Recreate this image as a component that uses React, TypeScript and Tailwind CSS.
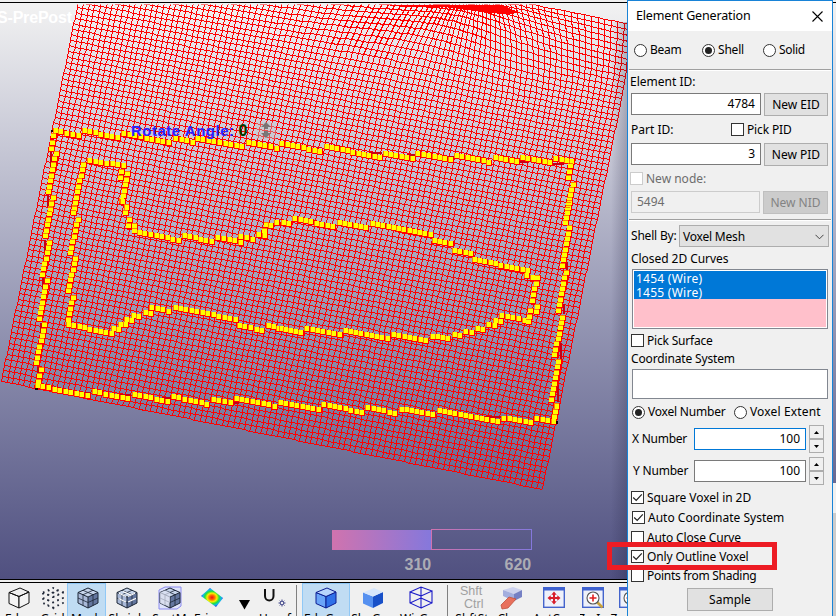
import React from "react";

type Pt = [number, number];

/* ---------- red shell mesh ---------- */
const COLS = 98;
const ROWS = 84;

function node(i: number, j: number): Pt {
  const x = 1 + i * 5.52 + j * 1.115;
  const y = 381 + i * 1.102 - j * 5.5;
  const dx = x - 474;
  const dy = y + 2;
  const pullX = 0.5 * Math.exp(-((dx * dx) / 11000 + (dy * dy) / 2400));
  const pullY = 0.8 * Math.exp(-((dx * dx) / 15000 + (dy * dy) / 2000));
  return [Math.round(x - dx * pullX), Math.round(y - dy * pullY)];
}

function buildMesh(): string {
  const out: string[] = [];
  for (let j = 0; j <= ROWS; j++) {
    const pts: string[] = [];
    for (let i = 0; i <= COLS; i++) pts.push(node(i, j).join(" "));
    out.push("M" + pts.join("L"));
  }
  for (let i = 0; i <= COLS; i++) {
    const pts: string[] = [];
    for (let j = 0; j <= ROWS; j++) pts.push(node(i, j).join(" "));
    out.push("M" + pts.join("L"));
  }
  return out.join("");
}

const MESH = buildMesh();

/* ---------- yellow voxel runs: [x1, y1, x2, y2] in thirds of a pixel ---------- */
type Group = { ox: number; oy: number; runs: number[][] };

const VOXELS: Group[] = [
  {
    ox: 0,
    oy: 0,
    runs: [
      [165, 392, 235, 406], [253, 391, 352, 413], [371, 401, 505, 427], [527, 415, 576, 426],
      [592, 416, 725, 440], [745, 427, 828, 444],
      [161, 407, 153, 445], [168, 459, 146, 575], [160, 592, 150, 628],
      [250, 492, 222, 625], [268, 481, 370, 497], [365, 515, 362, 532], [382, 521, 371, 587],
      [365, 602, 365, 602], [380, 622, 380, 622],
    ],
  },
  {
    ox: 280,
    oy: 0,
    runs: [
      [5, 430, 119, 454], [138, 440, 298, 472], [315, 459, 397, 474], [413, 461, 511, 479],
      [530, 467, 625, 486], [645, 471, 709, 484], [727, 472, 809, 488], [827, 474, 875, 484],
      [872, 497, 864, 533], [879, 552, 863, 628],
    ],
  },
  {
    ox: 0,
    oy: 200,
    runs: [
      [155, 8, 137, 107], [149, 127, 127, 222], [141, 242, 119, 355], [133, 374, 110, 488],
      [123, 508, 114, 545],
      [226, 8, 220, 38], [234, 58, 211, 158], [226, 175, 205, 272], [219, 292, 205, 358],
      [205, 373, 334, 401], [367, 3, 367, 3], [379, 20, 375, 38], [388, 58, 385, 75],
      [403, 77, 403, 92], [418, 96, 535, 121], [553, 107, 634, 124], [653, 111, 721, 126],
      [722, 110, 757, 117], [775, 102, 793, 107], [798, 74, 793, 92], [812, 77, 812, 77],
      [830, 66, 830, 66],
      [834, 384, 804, 377], [785, 391, 718, 376], [705, 358, 525, 322], [505, 333, 455, 322],
      [452, 339, 436, 338], [416, 349, 400, 346], [395, 362, 379, 358], [377, 374, 360, 373],
      [355, 388, 340, 386],
    ],
  },
  {
    ox: 280,
    oy: 200,
    runs: [
      [868, 8, 855, 66], [868, 83, 846, 196], [858, 217, 834, 330], [848, 351, 824, 464],
      [836, 484, 813, 598], [828, 618, 828, 618],
      [10, 67, 25, 71], [44, 56, 158, 79], [177, 66, 257, 82], [277, 71, 450, 102],
      [463, 122, 510, 131], [523, 150, 572, 161], [583, 179, 742, 211], [740, 226, 757, 232],
      [772, 233, 757, 300], [772, 320, 768, 335], [752, 331, 745, 365], [732, 360, 665, 347],
      [662, 364, 647, 360], [642, 375, 626, 373], [608, 387, 591, 384], [573, 397, 556, 394],
      [538, 407, 522, 404], [503, 416, 456, 408], [436, 422, 341, 402], [321, 415, 195, 390],
      [177, 403, 80, 385], [60, 396, 3, 384],
    ],
  },
  {
    ox: 0,
    oy: 380,
    runs: [
      [112, 17, 262, 47], [283, 35, 383, 56], [402, 43, 502, 64], [520, 50, 620, 72],
      [640, 58, 690, 68], [708, 54, 823, 78], [841, 66, 955, 88],
    ],
  },
  {
    ox: 320,
    oy: 400,
    runs: [
      [11, 13, 125, 37], [143, 22, 223, 40], [243, 27, 337, 44], [357, 32, 532, 65],
      [551, 54, 631, 68], [650, 55, 700, 65], [708, 17, 702, 50],
    ],
  },
];

type Cell = { x: number; y: number; upright: boolean };

function buildVoxels(): Cell[] {
  const out: Cell[] = [];
  for (const g of VOXELS) {
    for (const [x1, y1, x2, y2] of g.runs) {
      const n = Math.round(Math.hypot(x2 - x1, y2 - y1) / 16.6);
      for (let k = 0; k <= n; k++) {
        const t = n === 0 ? 0 : k / n;
        out.push({
          x: Math.round(g.ox + (x1 + (x2 - x1) * t) / 3 - 2.5),
          y: Math.round(g.oy + (y1 + (y2 - y1) * t) / 3 - 2.5),
          upright: Math.abs(y2 - y1) > Math.abs(x2 - x1),
        });
      }
    }
  }
  return out;
}

const VOXEL_CELLS = buildVoxels();

/* dark slivers of the outline wire seen beside the voxels */
const SLIVERS =
  "M368 152H381M406 154H415M446 156H453M519 161H527M552 163H563M50 150V168M47 194V206M44 239V250M42 277V291M40 322V338M37 366V374" +
  "M76 392H90M119 394H130M161 397H171M232 402H238M480 416H500M566 261V269M563 303V313M560 342V358M557 384V401";

function Viewport() {
  return (
    <div className="h-[576px] w-full bg-linear-to-b from-[#f2f2f2] to-[#505080]">
      <svg width="836" height="576" viewBox="0 3 836 576" className="block">
        <defs>
          <linearGradient id="bar" x1="0" x2="1" y1="0" y2="0">
            <stop offset="0" stopColor="#d073ae" />
            <stop offset="1" stopColor="#8578dc" />
          </linearGradient>
          <linearGradient id="shade" x1="0" x2="1" y1="0" y2="0">
            <stop offset="0" stopColor="#202040" stopOpacity="0" />
            <stop offset="1" stopColor="#202040" stopOpacity="0.26" />
          </linearGradient>
          <clipPath id="view">
            <rect x="0" y="4" width="836" height="575" />
          </clipPath>
        </defs>
        <text x="-3" y="23" fontSize="16" fontWeight="bold" fill="#fff" textLength="75" className="font-['Liberation_Sans',Arial,sans-serif]">
          S-PrePost
        </text>
        <g clipPath="url(#view)" transform="translate(.5 .5)" shapeRendering="crispEdges">
          <path d={MESH} fill="none" stroke="#ff0000" strokeWidth="1" />
          <path d={SLIVERS} fill="none" stroke="#c80014" strokeWidth="2" />
          <path d="M379 4H500L519 12L508 14L485 12L440 6L400 6Z" fill="#ff0000" />
          {VOXEL_CELLS.map((c, k) => (
            <rect key={k} x={c.x - 0.5} y={c.y - 0.5} width="6" height="6" fill="#ff0000" />
          ))}
          {VOXEL_CELLS.map((c, k) => (
            <rect key={k} x={c.x - 0.5} y={c.y - 0.5} width="5" height="5" fill="#ffff00" />
          ))}
          {VOXEL_CELLS.map((c, k) => (
            <rect
              key={k}
              x={c.x - 0.5}
              y={c.y - 0.5}
              width={c.upright ? 5 : 1}
              height={c.upright ? 1 : 5}
              fill="#ff0000"
              opacity=".5"
            />
          ))}
          <path d="M34 388h3M51 129v2M556 420v3" stroke="#200000" strokeWidth="2" />
        </g>
        <g fontSize="15" fontWeight="bold" className="font-['Liberation_Sans',Arial,sans-serif]">
          <text x="131" y="135.5" fill="#2424ff" textLength="103">
            Rotate Angle:
          </text>
          <text x="238.5" y="135.5" fill="#003c00" fontSize="16">
            0
          </text>
        </g>
        <rect x="256" y="122" width="20" height="17" fill="#c8c8c8" opacity=".4" />
        <path d="M266 122l5 5h-3v2h-4v-2h-3zM266 138l5-5h-3v-2h-4v2h-3z" fill="#707070" opacity=".9" />
        <rect x="332" y="530" width="99.500" height="20" fill="url(#bar)" />
        <rect x="431.500" y="529.500" width="100" height="20" fill="none" stroke="url(#bar)" />
        <g fontSize="16" fontWeight="bold" fill="#acacb4" className="font-['Liberation_Sans',Arial,sans-serif]">
          <text x="404.500" y="569.500">310</text>
          <text x="504.500" y="569.500">620</text>
        </g>
        <rect x="611" y="22" width="16" height="557" fill="url(#shade)" />
      </svg>
    </div>
  );
}

/* ---------- toolbar ---------- */
function Tool({
  width,
  label,
  active,
  children,
}: {
  width: string;
  label: string;
  active?: boolean;
  children: React.ReactNode;
}) {
  return (
    <div
      className={`${width} flex h-[50px] shrink-0 flex-col items-center overflow-hidden border ${
        active ? "border-[#90c8f6] bg-[#c0dcf3]" : "border-transparent"
      }`}
    >
      <div className="flex h-[27px] shrink-0 items-center justify-center">{children}</div>
      <span className="text-[12px] leading-[15px] whitespace-nowrap text-black">{label}</span>
    </div>
  );
}

function Cube({ top, left, right, line }: { top: string; left: string; right: string; line: string }) {
  return (
    <svg width="24" height="24" viewBox="0 0 24 24" stroke={line} strokeLinejoin="round">
      <path d="M2 6.500L12 10.500V22L2 17.500Z" fill={left} />
      <path d="M12 10.500L22 6V17L12 22Z" fill={right} />
      <path d="M2 6.500L13 2L22 6L12 10.500Z" fill={top} />
    </svg>
  );
}

function MeshCube({ variant }: { variant: "points" | "solid" | "shrink" | "section" }) {
  const faces = variant !== "points";
  return (
    <svg width="26" height="24" viewBox="0 0 26 24">
      {variant === "section" && <path d="M2 4L8 1H24V20L20 23H2Z" fill="#dfe4fa" stroke="#8a8af0" />}
      {faces && (
        <>
          <path d="M3 6.500L13 11V22L3 17Z" fill={variant === "section" ? "#cdd4e4" : "#a9b9d8"} />
          <path d="M13 11L23 6.500V17L13 22Z" fill="#64779f" />
          <path d="M3 6.500L13 2L23 6.500L13 11Z" fill="#c6d4ea" />
        </>
      )}
      {variant === "points" ? (
        <g fill="none" stroke="#202838" strokeWidth="1.800" strokeDasharray="1.6 3.6">
          <path d="M3 6.500L13 11V22L3 17ZM13 11L23 6.500V17L13 22M3 6.500L13 2L23 6.500M3 12L13 16.500L23 12M8 4.300L18 8.700V19.500M18 4.300L8 8.700V19.500" />
        </g>
      ) : (
        <g fill="none" stroke="#1c2636">
          <path d="M3 6.500L13 11V22L3 17ZM13 11L23 6.500V17L13 22M3 6.500L13 2L23 6.500" strokeWidth="1" />
          <path d="M3 12L13 16.500L23 12M8 4.300L18 8.700V19.500M18 4.300L8 8.700V19.500" strokeWidth=".8" />
        </g>
      )}
      {variant === "shrink" && (
        <path d="M4.500 12.500L12 16M14 16L22 12.400M5 7.300L12 10.500M14 10.500L21 7.300M9 5.500L17 9" stroke="#fff" strokeWidth="1.200" />
      )}
      {variant === "section" && <path d="M3 6.500L8 4.300L13 6.500V16.500L8 19.500L3 17Z" fill="#dfe4f4" opacity=".7" />}
    </svg>
  );
}

function FitWindow({ kind }: { kind: "arrows" | "zoom" }) {
  return (
    <svg width="22" height="22" viewBox="0 0 22 22">
      <rect x=".7" y=".7" width="20.600" height="19.600" fill="#eef1fa" stroke="#4464cc" strokeWidth="1.400" />
      <rect width="22" height="3.500" fill="#3f62d0" />
      {kind === "arrows" ? (
        <path
          d="M11 4.500l2.700 3.200h-1.700v2.300H14.300V8.300l3.200 2.700L14.300 13.700v-1.700h-2.300V14.300h1.700L11 17.500l-2.700-3.200h1.700v-2.300H7.700v1.700L4.500 11L7.700 8.300v1.700h2.300V7.700H8.300z"
          fill="#d81e2c"
        />
      ) : (
        <>
          <path d="M15 15l5.500 5.500" stroke="#c9a23c" strokeWidth="2.600" />
          <circle cx="11" cy="11" r="6" fill="#fff" stroke="#555" strokeWidth="1.100" />
          <path d="M11 7.500v7M7.500 11h7" stroke="#e02020" strokeWidth="1.600" />
        </>
      )}
    </svg>
  );
}

function Toolbar() {
  return (
    <div className="flex h-[33px] w-full overflow-hidden bg-[#f0f0f0]">
      <Tool width="w-[38px]" label="Edge">
        <Cube top="none" left="#f4f4f4" right="#f4f4f4" line="#111" />
      </Tool>
      <Tool width="w-[29px]" label="Grid">
        <MeshCube variant="points" />
      </Tool>
      <Tool width="w-[39px]" label="Mesh" active>
        <div className="ml-[3px]">
          <MeshCube variant="solid" />
        </div>
      </Tool>
      <Tool width="w-[41px]" label="Shrink">
        <MeshCube variant="shrink" />
      </Tool>
      <Tool width="w-[45px]" label="SectM">
        <MeshCube variant="section" />
      </Tool>
      <Tool width="w-[40px]" label="Fringe">
        <svg width="24" height="22" viewBox="0 0 24 22">
          <defs>
            <radialGradient id="fringe">
              <stop offset="0" stopColor="#f01010" />
              <stop offset=".25" stopColor="#ff7000" />
              <stop offset=".45" stopColor="#f6f000" />
              <stop offset=".65" stopColor="#20e040" />
              <stop offset=".85" stopColor="#10b8f0" />
              <stop offset="1" stopColor="#2040e0" />
            </radialGradient>
          </defs>
          <path d="M10 1L23 11L16 20L1 9Z" fill="url(#fringe)" />
        </svg>
      </Tool>
      <div className="w-[24px] shrink-0 pt-[17px] pl-[7px]">
        <svg width="11" height="10" viewBox="0 0 11 10">
          <path d="M0 0H11L5.500 9.500Z" fill="#000" />
        </svg>
      </div>
      <Tool width="w-[38px]" label="Unref">
        <svg width="26" height="24" viewBox="0 0 26 24">
          <path d="M3 3V10C3 16 11.500 16 11.500 10V3" fill="none" stroke="#111" strokeWidth="2" />
          <circle cx="20" cy="17" r="1.800" fill="none" stroke="#454a8c" />
          <path d="M20 13.500V15M20 19v1.500M16.500 17H18M22 17h1.500M17.700 14.700l1 1M21.500 18.500l1 1M22.300 14.700l-1 1M17.700 19.400l1-1" stroke="#454a8c" />
        </svg>
      </Tool>
      <div className="mt-[2px] mr-[5px] ml-[2px] h-[32px] w-px shrink-0 bg-[#808080]" />
      <Tool width="w-[48px]" label="EdgGeo" active>
        <Cube top="#b8d4fc" left="#6aa4f8" right="#2f70e8" line="#0c1c90" />
      </Tool>
      <Tool width="w-[46px]" label="ShaGeo">
        <Cube top="#d6e6fc" left="#5590f0" right="#1850c8" line="none" />
      </Tool>
      <Tool width="w-[50px]" label="WirGeo">
        <svg width="24" height="24" viewBox="0 0 24 24" fill="none" stroke="#1c1cc8" strokeWidth="1.100">
          <path d="M1 6L12 10V22L1 17ZM12 10L23 5V17L12 22M1 6L12 1L23 5M12 1V12L1 17M12 12L23 17" />
        </svg>
      </Tool>
      <div className="mt-[2px] ml-px h-[32px] w-px shrink-0 bg-[#808080]" />
      <Tool width="w-[48px]" label="ShftSt">
        <div className="w-[24px] pt-px font-['Liberation_Sans',Arial,sans-serif] text-[12.500px] leading-[13px] text-[#a0a0a0]">
          <div>Shft</div>
          <div className="pl-[4px]">Ctrl</div>
        </div>
      </Tool>
      <Tool width="w-[32px]" label="Clear">
        <svg width="24" height="24" viewBox="0 0 24 24">
          <path d="M3 4L13 1L22 4L14 8Z" fill="#cdd2ee" />
          <path d="M3 4L14 8V15L3 10Z" fill="#a3aede" />
          <path d="M14 8L22 4V11L14 15Z" fill="#7580c4" />
          <path d="M1 19L9 11L16 13L8 22L2 23Z" fill="#e8705c" stroke="#c0503c" strokeWidth=".8" />
        </svg>
      </Tool>
      <Tool width="w-[51px]" label="AutCen">
        <FitWindow kind="arrows" />
      </Tool>
      <Tool width="w-[28px]" label="ZmIn">
        <FitWindow kind="zoom" />
      </Tool>
      <Tool width="w-[46px]" label="ZmOut">
        <FitWindow kind="zoom" />
      </Tool>
    </div>
  );
}

/* ---------- dialog ---------- */
function Radio({ on }: { on?: boolean }) {
  return (
    <span className="flex size-[13px] shrink-0 items-center justify-center rounded-full border border-[#333] bg-white">
      {on && <span className="size-[7px] rounded-full bg-[#222]" />}
    </span>
  );
}

function Box({ on, off }: { on?: boolean; off?: boolean }) {
  return (
    <span className={`flex size-[13px] shrink-0 items-center justify-center border bg-white ${off ? "border-[#ccc]" : "border-[#333]"}`}>
      {on && (
        <svg width="11" height="11" viewBox="0 0 11 11">
          <path d="M1.200 5.500L4.200 8.400L9.800 2.300" fill="none" stroke="#222" strokeWidth="1.200" />
        </svg>
      )}
    </span>
  );
}

function Btn({ className, children }: { className: string; children: React.ReactNode }) {
  return (
    <div className={`flex h-[23px] shrink-0 items-center justify-center border ${className}`}>{children}</div>
  );
}

function Field({ className, children }: { className: string; children?: React.ReactNode }) {
  return <div className={`flex h-[22px] shrink-0 items-center border ${className}`}>{children}</div>;
}

function Rule() {
  return <div className="mr-px ml-px h-[2px] shrink-0 border-t border-[#a0a0a0] bg-white" />;
}

function Spinner() {
  return (
    <div className="ml-[3px] flex w-[15px] flex-col">
      <div className="flex h-[14px] items-center justify-center border border-[#adadad]">
        <svg width="5" height="3" viewBox="0 0 5 3">
          <path d="M0 3L2.500 0L5 3Z" fill="#000" />
        </svg>
      </div>
      <div className="flex h-[14px] items-center justify-center border border-[#adadad]">
        <svg width="5" height="3" viewBox="0 0 5 3">
          <path d="M0 0L2.500 3L5 0Z" fill="#000" />
        </svg>
      </div>
    </div>
  );
}

function Dialog() {
  return (
    <div className="absolute top-0 left-[627px] flex h-[620px] w-[206px] flex-col border border-[#1883d7] bg-[#f0f0f0] whitespace-nowrap">
      <div className="flex h-[30px] shrink-0 items-center justify-between bg-white pr-[9px] pl-[8px]">
        <span className="text-[12.500px] tracking-[-.16px]">Element Generation</span>
        <svg width="11" height="11" viewBox="0 0 11 11">
          <path d="M.5 .5L10.500 10.500M10.500 .5L.5 10.500" stroke="#000" strokeWidth="1.100" />
        </svg>
      </div>
      <div className="flex h-[38px] shrink-0 items-center pl-[6px]">
        <Radio />
        <span className="ml-[3px] w-[52px] tracking-[-.3px]">Beam</span>
        <Radio on />
        <span className="ml-[3px] w-[45px] tracking-[-.2px]">Shell</span>
        <Radio />
        <span className="ml-[3px] tracking-[-.3px]">Solid</span>
      </div>
      <Rule />
      <div className="flex h-[22px] shrink-0 items-center pl-[2px]">Element ID:</div>
      <div className="flex h-[23px] shrink-0 pl-[3px]">
        <Field className="w-[130px] justify-end border-[#7a7a7a] bg-white pr-[5px]">4784</Field>
        <Btn className="ml-[3px] w-[64px] border-[#adadad] bg-[#e1e1e1]">New EID</Btn>
      </div>
      <div className="flex h-[27px] shrink-0 items-center pl-[3px]">
        <span className="w-[100px]">Part ID:</span>
        <Box />
        <span className="ml-[3px] tracking-[-.15px]">Pick PID</span>
      </div>
      <div className="flex h-[23px] shrink-0 pl-[3px]">
        <Field className="w-[130px] justify-end border-[#7a7a7a] bg-white pr-[5px]">3</Field>
        <Btn className="ml-[3px] w-[64px] border-[#adadad] bg-[#e1e1e1]">New PID</Btn>
      </div>
      <div className="flex h-[25px] shrink-0 items-center pl-[2px] text-[#6d6d6d]">
        <Box off />
        <span className="ml-[3px]">New node:</span>
      </div>
      <div className="flex h-[23px] shrink-0 pl-[3px] text-[#6d6d6d]">
        <Field className="w-[129px] border-[#ccc] pl-[5px]">5494</Field>
        <Btn className="ml-[3px] w-[65px] border-[#bfbfbf] bg-[#cccccc] text-[#838383]">New NID</Btn>
      </div>
      <div className="h-[5px] shrink-0" />
      <Rule />
      <div className="mt-[4px] flex h-[22px] shrink-0 items-center pl-[3px]">
        <span className="w-[48px] tracking-[-.2px]">Shell By:</span>
        <div className="flex h-[22px] w-[150px] items-center justify-between border border-[#adadad] bg-[#e1e1e1] pt-px pr-[4px] pl-[3px] tracking-[-.2px]">
          Voxel Mesh
          <svg width="9" height="6" viewBox="0 0 9 6">
            <path d="M.5 .8L4.500 4.800L8.500 .8" fill="none" stroke="#444" />
          </svg>
        </div>
      </div>
      <div className="flex h-[22px] shrink-0 items-center pt-[2px] pl-[3px] tracking-[-.05px]">Closed 2D Curves</div>
      <div className="ml-[4px] h-[60px] w-[196px] shrink-0 border border-[#828790] bg-white p-px">
        <div className="h-[56px] bg-[#ffc0cb]">
          <div className="h-[28px] bg-[#0078d7] pl-[2px] text-white">
            <div className="pt-px text-[12px] leading-[14px] tracking-[.25px]">1454 (Wire)</div>
            <div className="text-[12px] leading-[14px] tracking-[.25px]">1455 (Wire)</div>
          </div>
        </div>
      </div>
      <div className="flex h-[23px] shrink-0 items-center pl-[3px]">
        <Box />
        <span className="ml-[3px] tracking-[-.2px]">Pick Surface</span>
      </div>
      <div className="mb-[3px] flex h-[14px] shrink-0 items-center pl-[3px] tracking-[-.15px]">Coordinate System</div>
      <div className="ml-[4px] h-[30px] w-[196px] shrink-0 border border-[#828790] bg-white" />
      <div className="flex h-[26px] shrink-0 items-center pl-[4px]">
        <Radio on />
        <span className="ml-[3px] w-[86px] tracking-[-.2px]">Voxel Number</span>
        <Radio />
        <span className="ml-[3px] tracking-[.15px]">Voxel Extent</span>
      </div>
      <div className="flex h-[28px] shrink-0 items-center pl-[4px]">
        <span className="w-[62px] tracking-[-.25px]">X Number</span>
        <Field className="w-[112px] justify-end border-[#0078d7] bg-white pr-[5px]">100</Field>
        <Spinner />
      </div>
      <div className="mt-[4px] flex h-[28px] shrink-0 items-center pl-[4px]">
        <span className="w-[62px] pl-px tracking-[-.2px]">Y Number</span>
        <Field className="w-[112px] justify-end border-[#7a7a7a] bg-white pr-[5px]">100</Field>
        <Spinner />
      </div>
      <div className="mt-[3px] flex h-[19px] shrink-0 items-center pl-[3px]">
        <Box on />
        <span className="ml-[3px] tracking-[-.05px]">Square Voxel in 2D</span>
      </div>
      <div className="flex h-[20px] shrink-0 items-center pl-[4px]">
        <Box on />
        <span className="ml-[3px] pt-px">Auto Coordinate System</span>
      </div>
      <div className="flex h-[20px] shrink-0 items-center pl-[3px]">
        <Box />
        <span className="ml-[3px] pt-px tracking-[-.15px]">Auto Close Curve</span>
      </div>
      <div className="flex h-[19px] shrink-0 items-center pl-[3px]">
        <Box on />
        <span className="ml-[3px] tracking-[-.12px]">Only Outline Voxel</span>
      </div>
      <div className="flex h-[19px] shrink-0 items-center pl-[3px]">
        <Box />
        <span className="ml-[3px] tracking-[-.28px]">Points from Shading</span>
      </div>
      <Btn className="mt-[3px] ml-[59px] w-[86px] border-[#adadad] bg-[#e1e1e1]">Sample</Btn>
    </div>
  );
}

export default function App() {
  return (
    <div className="relative h-[616px] w-[836px] overflow-hidden bg-[#f0f0f0] font-['Noto_Sans','DejaVu_Sans',sans-serif] text-[12px] leading-[14px] text-black">
      <div className="h-[3px] border-b border-black bg-[#f0f0f0]" />
      <Viewport />
      <div className="h-[4px] border-y border-black bg-[#f0f0f0]" />
      <Toolbar />
      <Dialog />
      <div className="absolute top-[483px] left-[833px] h-[133px] w-[3px] border-t-[30px] border-[#f0f0f0] bg-[#cccccc]" />
      <div className="absolute top-[542px] left-[607px] h-[28px] w-[170px] border-5 border-[#ed1c24]" />
    </div>
  );
}
